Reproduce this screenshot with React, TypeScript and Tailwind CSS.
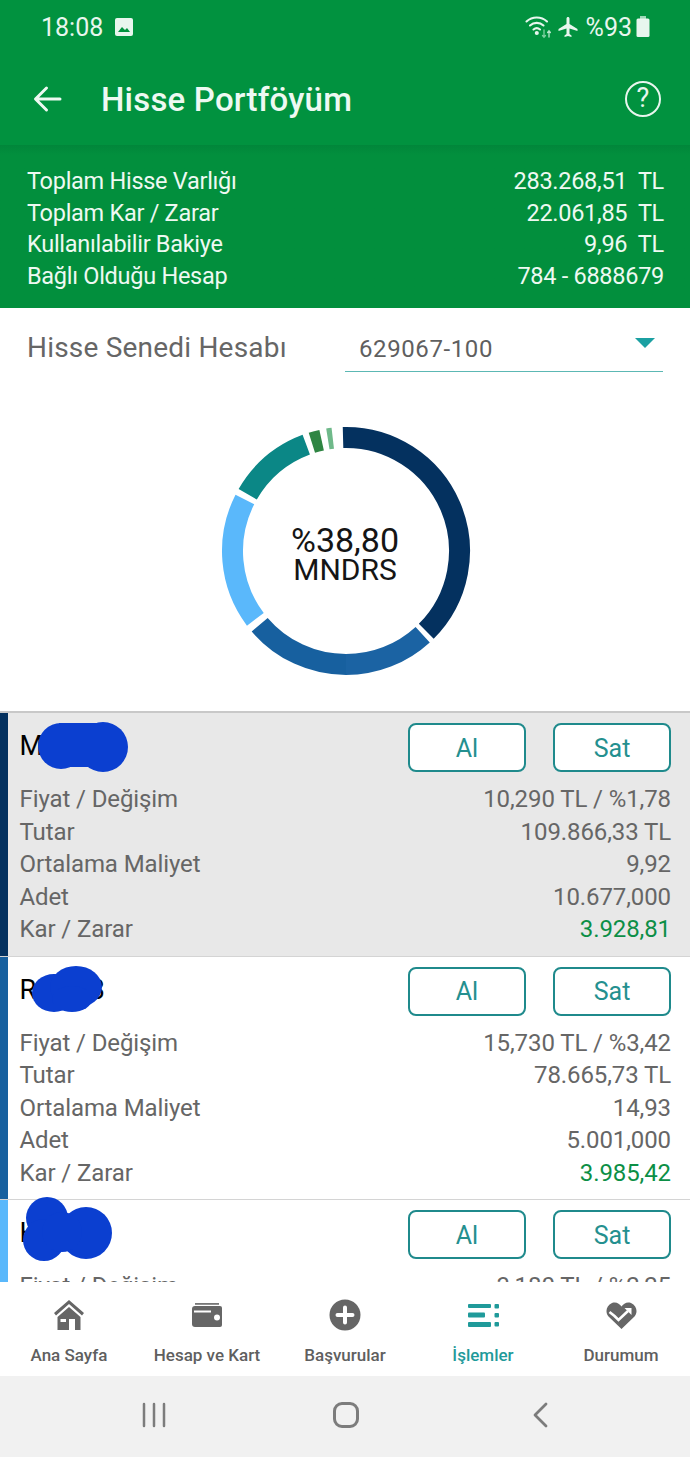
import React from "react";

const arc = (a0: number, a1: number, r = 113.5) => {
  const p = (a: number) => {
    const t = (a * Math.PI) / 180;
    return `${(125 + r * Math.sin(t)).toFixed(2)} ${(125 - r * Math.cos(t)).toFixed(2)}`;
  };
  return `M ${p(a0)} A ${r} ${r} 0 ${a1 - a0 > 180 ? 1 : 0} 1 ${p(a1)}`;
};

const segs: [number, number, string][] = [
  [-1.5, 135, "#04315f"],
  [137.5, 180, "#1b63a3"],
  [180, 229.5, "#17609f"],
  [233, 297, "#5ab8fb"],
  [300, 339.5, "#0b8786"],
  [342.5, 347.6, "#2f8543"],
  [350.8, 353.3, "#6fb98a"],
];

function Blob({ kind }: { kind: number }) {
  if (kind === 0)
    return (
      <svg width="100" height="56" viewBox="0 0 100 56" className="absolute left-[33px] top-[8px] blur-[0.6px]">
        <circle cx="28" cy="25" r="23" fill="#0b3fd0" />
        <circle cx="70" cy="26" r="25" fill="#0b3fd0" />
        <rect x="26" y="2" width="48" height="44" fill="#0b3fd0" />
      </svg>
    );
  if (kind === 1)
    return (
      <svg width="76" height="52" viewBox="0 0 76 52" className="absolute left-[30px] top-[8px] blur-[0.6px]">
        <ellipse cx="24" cy="28" rx="22" ry="19" fill="#0b3fd0" />
        <ellipse cx="46" cy="22" rx="26" ry="21" fill="#0b3fd0" />
        <ellipse cx="42" cy="34" rx="20" ry="13" fill="#0b3fd0" />
      </svg>
    );
  return (
    <svg width="100" height="72" viewBox="0 0 100 72" className="absolute left-[20px] top-[-6px] blur-[0.6px]">
      <circle cx="27" cy="24" r="21" fill="#0b3fd0" />
      <circle cx="24" cy="46" r="21" fill="#0b3fd0" />
      <circle cx="66" cy="39" r="26" fill="#0b3fd0" />
      <circle cx="42" cy="38" r="20" fill="#0b3fd0" />
    </svg>
  );
}

function Row({
  name,
  bar,
  bg,
  blob,
  vals,
}: {
  name: string;
  bar: string;
  bg: string;
  blob: number;
  vals: string[];
}) {
  const labels = ["Fiyat / Değişim", "Tutar", "Ortalama Maliyet", "Adet", "Kar / Zarar"];
  return (
    <div className={`relative flex h-[243.5px] shrink-0 border-b border-[#d4d4d4] ${bg}`}>
      <div className={`w-[8px] shrink-0 ${bar}`} />
      <div className="flex min-w-0 flex-1 flex-col pl-[11.5px] pr-[19px] pt-[10px]">
        <div className="flex h-[49px] items-start justify-between">
          <span className="whitespace-pre pt-[7px] text-[27px] leading-[32px] text-black">{name}</span>
          <div className="flex gap-[27px]">
            <button className="h-[49px] w-[118px] rounded-[8px] border-2 border-[#1f8a8c] bg-white pt-[2px] text-[25px] text-[#24908f]">
              Al
            </button>
            <button className="h-[49px] w-[118px] rounded-[8px] border-2 border-[#1f8a8c] bg-white pt-[2px] text-[25px] text-[#24908f]">
              Sat
            </button>
          </div>
        </div>
        <div className="mt-[11px] flex flex-col">
          {labels.map((l, i) => (
            <div key={l} className="flex h-[32.5px] items-center justify-between text-[24px] leading-[32px] tracking-[-0.1px] text-[#666666]">
              <span>{l}</span>
              <span className={i === 4 ? "text-[#0c8f46]" : ""}>{vals[i]}</span>
            </div>
          ))}
        </div>
      </div>
      <Blob kind={blob} />
    </div>
  );
}

const summary = [
  ["Toplam Hisse Varlığı", "283.268,51  TL"],
  ["Toplam Kar / Zarar", "22.061,85  TL"],
  ["Kullanılabilir Bakiye", "9,96  TL"],
  ["Bağlı Olduğu Hesap", "784 - 6888679"],
];

function NavItem({ label, active, children }: { label: string; active?: boolean; children: React.ReactNode }) {
  return (
    <div className="flex w-[138px] flex-col items-center">
      <div className="flex h-[44px] w-full items-center justify-center">{children}</div>
      <span className={`mt-[8px] text-[17px] font-medium leading-[20px] ${active ? "text-[#1f9a9a]" : "text-[#5f5f5f]"}`}>
        {label}
      </span>
    </div>
  );
}

export default function App() {
  return (
    <div className="flex h-[1457px] w-[690px] flex-col overflow-hidden bg-white font-['Roboto',sans-serif]">
      <div className="h-[145px] shrink-0 bg-[#01923f] text-[#e8f6ee]">
        <div className="flex h-[52px] items-center pl-[41px] pr-[40px] pt-[2px]">
          <span className="text-[25px] leading-none">18:08</span>
          <svg width="20" height="20" viewBox="0 0 20 20" className="ml-[11px]">
            <rect x="1" y="1" width="18" height="18" rx="2" fill="#e8f6ee" />
            <path d="M4 15 L8 10 L11 13 L13 11 L16 15 Z" fill="#01923f" />
          </svg>
          <div className="flex-1" />
          <svg width="27" height="26" viewBox="0 0 27 26" fill="none" stroke="#e8f6ee" strokeWidth="2.1" strokeLinecap="round">
            <path d="M1.5 7.5 A15 15 0 0 1 22 7.5" />
            <path d="M5 11.5 A10 10 0 0 1 18.5 11.5" />
            <path d="M8.5 15.5 A5 5 0 0 1 15 15.5" />
            <circle cx="11.8" cy="19" r="1" fill="#e8f6ee" />
            <path d="M19 16 V23 M17.5 21.5 L19 23.2 L20.5 21.5" stroke="#7fd0a0" strokeWidth="1.3" />
            <path d="M24 23 V17 M22.6 18.5 L24 16.8 L25.4 18.5" stroke="#b8e6cb" strokeWidth="1.3" />
          </svg>
          <svg width="24" height="26" viewBox="0 0 24 24" className="ml-[4px]">
            <path fill="#e8f6ee" d="M21.5 16v-2l-8-5V3.5C13.5 2.7 12.8 2 12 2s-1.500.7-1.500 1.500V9l-8 5v2l8-2.500V19l-2 1.500V22l3.500-1 3.500 1v-1.500l-2-1.500v-5.500l8 2.500z" />
          </svg>
          <span className="ml-[6px] text-[25px] leading-none">%93</span>
          <svg width="14" height="24" viewBox="0 0 14 24" className="ml-[4px]">
            <rect x="4" y="1" width="6" height="3" fill="#9fd8b8" />
            <rect x="0.500" y="3.500" width="13" height="18.500" rx="1.500" fill="#e8f6ee" />
          </svg>
        </div>
        <div className="flex h-[93px] items-center pl-[33px] pr-[29px]">
          <svg width="30" height="30" viewBox="0 0 30 30" fill="none" stroke="#eef9f2" strokeWidth="3" strokeLinecap="round" strokeLinejoin="round">
            <path d="M27 15 H3 M13.500 4 L2.500 15 L13.500 26" />
          </svg>
          <h1 className="ml-[38px] pt-[2px] text-[33px] font-medium leading-none tracking-[0.2px] text-[#eef9f2]">Hisse Portföyüm</h1>
          <div className="flex-1" />
          <div className="flex h-[36px] w-[36px] items-center justify-center rounded-full border-2 border-[#e8f6ee] text-[27px] leading-none">?</div>
        </div>
      </div>

      <div className="h-[163px] shrink-0 bg-[#028f3d] bg-gradient-to-b from-[#01863a] from-0% to-[#028f3d] to-[6%] pl-[27px] pr-[26px] pt-[20px] text-[#eef9f2]">
        {summary.map(([l, v]) => (
          <div key={l} className="flex h-[31.7px] items-center justify-between whitespace-pre text-[23.500px] leading-[30px] tracking-[-0.28px]">
            <span>{l}</span>
            <span>{v}</span>
          </div>
        ))}
      </div>

      <div className="flex h-[405px] shrink-0 flex-col border-b-2 border-[#c8c8c8]">
        <div className="flex h-[64px] items-stretch pl-[27px] pr-[27px] pt-[20px]">
          <span className="w-[318px] text-[28px] leading-[40px] tracking-[0.2px] text-[#666666]">Hisse Senedi Hesabı</span>
          <div className="relative flex h-[44px] flex-1 items-center border-b-[1.500px] border-[#5cb8b4] pb-[2px] pl-[14px] text-[24px] tracking-[0.6px] text-[#5f5f5f]">
            629067-100
            <div className="absolute right-[8px] top-[10px] h-0 w-0 border-x-[10px] border-t-[10px] border-x-transparent border-t-[#1ba0a2]" />
          </div>
        </div>
        <div className="relative ml-[221px] mt-[54px] h-[250px] w-[250px]">
          <svg width="250" height="250" viewBox="0 0 250 250">
            {segs.map(([a, b, c]) => (
              <path key={a} d={arc(a, b)} fill="none" stroke={c} strokeWidth="21" />
            ))}
          </svg>
          <div className="absolute inset-0 flex flex-col items-center justify-center pr-[2px] pt-[8px] text-[#151515]">
            <span className="text-[34px] leading-[30px]">%38,80</span>
            <span className="text-[30px] leading-[30px]">MNDRS</span>
          </div>
        </div>
      </div>

      <div className="min-h-0 flex-1 overflow-hidden">
        <Row name="M" bar="bg-[#04315f]" bg="bg-[#e8e8e8]" blob={0} vals={["10,290 TL / %1,78", "109.866,33 TL", "9,92", "10.677,000", "3.928,81"]} />
        <Row name="R        3" bar="bg-[#17609f]" bg="bg-white" blob={1} vals={["15,730 TL / %3,42", "78.665,73 TL", "14,93", "5.001,000", "3.985,42"]} />
        <Row name="H" bar="bg-[#5ab8fb]" bg="bg-white" blob={2} vals={["3,180 TL / %2,25", "", "", "", ""]} />
      </div>

      <div className="flex h-[94px] shrink-0 bg-white pt-[11px]">
        <NavItem label="Ana Sayfa">
          <svg width="30" height="30" viewBox="0 0 30 30" fill="#666666">
            <path d="M15 0 L30 13 L28 15.500 L15 4 L2 15.500 L0 13 Z" />
            <path fillRule="evenodd" d="M15 7 L26.500 17 V30 H21 V19 H15 V30 H3.500 V17 Z M6.500 19 V22 H12 V19 Z" />
          </svg>
        </NavItem>
        <NavItem label="Hesap ve Kart">
          <svg width="32" height="25" viewBox="0 0 32 25">
            <rect x="4" y="0" width="24" height="1.800" fill="#777777" />
            <path d="M1 6 Q1 3 4 3 H29 Q31 3 31 5 V22 Q31 24 29 24 H4 Q1 24 1 21 Z" fill="#666666" />
            <rect x="3" y="7.500" width="17" height="2" fill="#ffffff" />
            <circle cx="26" cy="14.500" r="3" fill="#ffffff" />
          </svg>
        </NavItem>
        <NavItem label="Başvurular">
          <svg width="32" height="32" viewBox="0 0 32 32">
            <circle cx="16" cy="16" r="15.500" fill="#666666" />
            <path d="M16 8.500 V23.500 M8.500 16 H23.500" stroke="#ffffff" strokeWidth="4" strokeLinecap="round" />
          </svg>
        </NavItem>
        <NavItem label="İşlemler" active>
          <svg width="31" height="23" viewBox="0 0 31 23" fill="#1f9a9a">
            <rect x="0" y="0" width="23" height="4" rx="1" />
            <rect x="0" y="8.500" width="17" height="5" rx="1" />
            <rect x="0" y="18" width="23" height="5" rx="1" />
            <rect x="26.500" y="0" width="4.500" height="4.500" rx="1" />
            <rect x="26.500" y="9" width="4.500" height="4.500" rx="1" />
            <rect x="26.500" y="18" width="4.500" height="4.500" rx="1" />
          </svg>
        </NavItem>
        <NavItem label="Durumum">
          <svg width="31" height="27" viewBox="0 0 31 27">
            <path d="M15.500 27 L2.500 14.500 C-1 10.500 0 3.500 6 1 C10 -0.500 13.500 1.500 15.500 4.500 C17.500 1.500 21 -0.500 25 1 C31 3.500 32 10.500 28.500 14.500 Z" fill="#666666" />
            <path d="M3.500 10 L8.500 14 L12.500 18 L22 9" fill="none" stroke="#ffffff" strokeWidth="2.600" />
            <path d="M18.500 6 H25.500 V13 Z" fill="#ffffff" />
          </svg>
        </NavItem>
      </div>

      <div className="flex h-[81px] shrink-0 items-center bg-[#f1f1f1] pb-[3px]">
        <svg width="24" height="26" viewBox="0 0 24 26" className="ml-[142px]" stroke="#7c7c7c" strokeWidth="2.500" strokeLinecap="round">
          <path d="M2 2 V24 M12 2 V24 M22 2 V24" />
        </svg>
        <div className="ml-[167px] h-[26px] w-[26px] rounded-[9px] border-[3px] border-[#7c7c7c]" />
        <svg width="16" height="26" viewBox="0 0 16 26" className="ml-[173px]" fill="none" stroke="#7c7c7c" strokeWidth="2.800" strokeLinecap="round" strokeLinejoin="round">
          <path d="M14 2 L3 13 L14 24" />
        </svg>
      </div>
    </div>
  );
}
